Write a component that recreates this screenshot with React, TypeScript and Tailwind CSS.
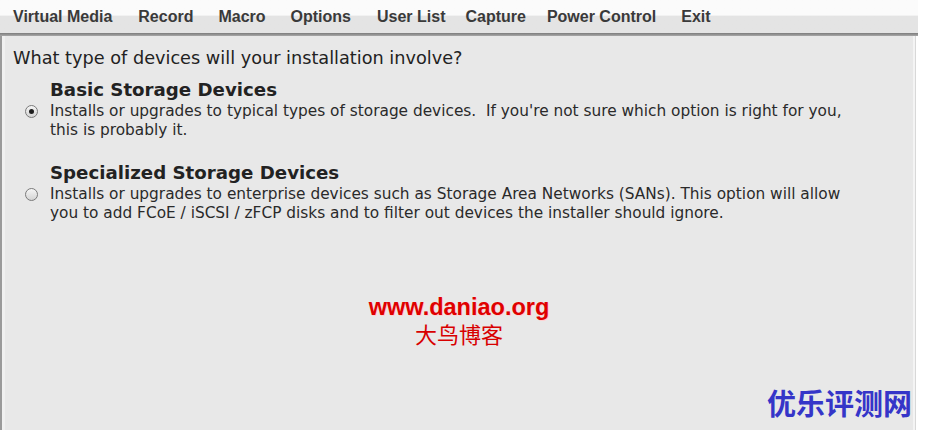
import React from 'react';

function Radio({ checked }: { checked: boolean }) {
  return (
    <div className="mt-[3px] flex h-[13px] w-[13px] shrink-0 items-center justify-center rounded-full border border-[#7a7a7a] bg-gradient-to-b from-[#f6f6f6] to-[#d4d4d4]">
      {checked && <div className="h-[5px] w-[5px] rounded-full bg-[#1e1e1e]" />}
    </div>
  );
}

function Option({ title, lines, checked, className }: { title: string; lines: string[]; checked: boolean; className: string }) {
  return (
    <div className={`pl-[20px] ${className}`}>
      <div className="pl-[25px] text-[18.2px] font-bold leading-[24px]">{title}</div>
      <div className="flex gap-[12px]">
        <Radio checked={checked} />
        <div className="text-[15.35px] leading-[19px] whitespace-pre text-[#2a2a2a]">
          {lines.map((l) => (
            <div key={l}>{l}</div>
          ))}
        </div>
      </div>
    </div>
  );
}

export default function App() {
  return (
    <div className="flex h-[430px] w-[926px] flex-col overflow-hidden bg-white">
      {/* Menu bar */}
      <div className="flex h-[33px] w-[918px] items-center bg-gradient-to-b from-[#fbfbfb] from-45% to-[#e4e4e4] to-50% pl-[13px] font-['Liberation_Sans',Arial,sans-serif] text-[16px] font-bold text-[#3a3a3a]">
        <span>Virtual Media</span>
        <span className="ml-[26px]">Record</span>
        <span className="ml-[25px]">Macro</span>
        <span className="ml-[25px]">Options</span>
        <span className="ml-[26px]">User List</span>
        <span className="ml-[20px]">Capture</span>
        <span className="ml-[21px]">Power Control</span>
        <span className="ml-[25px]">Exit</span>
      </div>
      <div className="h-[3px] w-[918px] bg-gradient-to-b from-[#7c7c7c] to-[#a8a8a8]" />

      {/* Installer panel */}
      <div className="flex flex-1">
        <div className="w-[2px] bg-[#9a9a9a]" />
        <div className="w-[3px] bg-[#f0f0f0]" />
        <div className="relative flex w-[908px] flex-col bg-[#e8e8e8] pt-[11px] font-['DejaVu_Sans',sans-serif] text-[#222]">
          <div className="pl-[8px] text-[17.7px] leading-[22px]">What type of devices will your installation involve?</div>

          <Option
            className="mt-[9px]"
            checked
            title="Basic Storage Devices"
            lines={[
              "Installs or upgrades to typical types of storage devices.  If you're not sure which option is right for you,",
              'this is probably it.',
            ]}
          />

          <Option
            className="mt-[21px]"
            checked={false}
            title="Specialized Storage Devices"
            lines={[
              'Installs or upgrades to enterprise devices such as Storage Area Networks (SANs). This option will allow',
              'you to add FCoE / iSCSI / zFCP disks and to filter out devices the installer should ignore.',
            ]}
          />

          {/* Watermarks */}
          <div className="mt-[72px] flex flex-col items-center">
            <div className="font-['Liberation_Sans',Arial,sans-serif] text-[23.5px] font-bold leading-[25px] text-[#e00000] [text-shadow:1px_1px_0_#ffd0d0]">
              www.daniao.org
            </div>
            <div className="font-['Noto_Sans_CJK_SC',sans-serif] text-[22px] leading-[26px] text-[#d80000]">大鸟博客</div>
          </div>
          <div className="absolute bottom-[11px] right-[1px] font-['Noto_Sans_CJK_SC',sans-serif] text-[29px] font-bold leading-[34px] text-[#3535c8]">
            优乐评测网
          </div>
        </div>
        <div className="w-[2px] bg-[#f4f4f4]" />
        <div className="w-[1px] bg-[#d8d8d8]" />
      </div>
    </div>
  );
}
